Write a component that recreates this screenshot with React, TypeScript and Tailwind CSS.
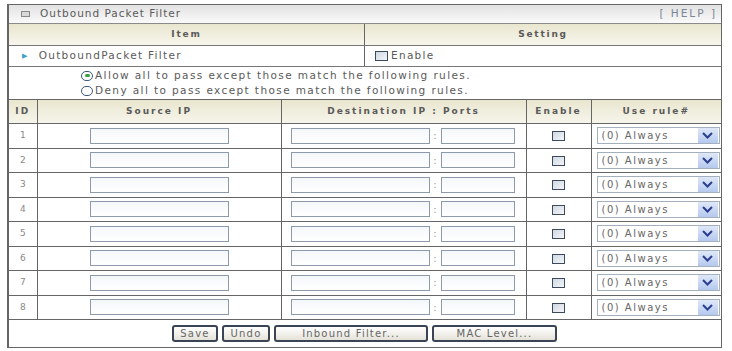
import React from "react";

const font = { fontFamily: '"DejaVu Sans", Verdana, sans-serif' };

function Box() {
  return (
    <span className="inline-block w-[13px] h-[10px] border border-[#3c4a5c] bg-gradient-to-br from-[#cfd8e2] to-[#f4f6f9] align-middle" />
  );
}

function TextBox({ w }: { w: string }) {
  return (
    <span className={`inline-block ${w} h-[16px] border border-[#8d9aab] bg-gradient-to-b from-[#f4f7fa] to-white align-middle`} />
  );
}

function Chevron() {
  return (
    <svg width="11" height="7" viewBox="0 0 11 7">
      <path d="M1 1 L5.5 5.5 L10 1" fill="none" stroke="#2c3f8f" strokeWidth="2" />
    </svg>
  );
}

function RuleSelect() {
  return (
    <div className="ml-[5px] w-[123px] h-[17px] border border-[#a5b0bf] bg-white flex items-center">
      <span className="flex-1 pl-[4px] text-[10px] text-[#666] tracking-[1.5px]">(0) Always</span>
      <span className="w-[20px] h-[15px] mr-[1px] flex items-center justify-center bg-gradient-to-b from-[#dfe8f8] to-[#b5c9ee]">
        <Chevron />
      </span>
    </div>
  );
}

function Btn({ w, label }: { w: string; label: string }) {
  return (
    <span className={`inline-flex ${w} h-[17px] items-center justify-center rounded-[3px] border-2 border-[#3b4454] bg-gradient-to-b from-white to-[#e4e2d8] text-[10px] text-[#666] tracking-[1.2px]`}>
      {label}
    </span>
  );
}

export default function App() {
  const rows = [1, 2, 3, 4, 5, 6, 7, 8];
  return (
    <div className="w-[732px] h-[351px] bg-white pt-[4px] pl-[7px]" style={font}>
      <div className="w-[715px] h-[344px] border border-[#666] border-l-2 flex flex-col">

        {/* TITLE BAR */}
        <div className="h-[19px] flex items-center justify-between bg-gradient-to-b from-[#e2e2e2] to-[#fafafa] border-b border-[#8a8a8a] pl-[12px] pr-[4px]">
          <div className="flex items-center text-[10.5px] text-[#5a5a5a] tracking-[1px]">
            <span className="inline-block w-[9px] h-[6px] border border-[#888] bg-[#d8d8d8] mr-[10px]" />
            Outbound Packet Filter
          </div>
          <span className="text-[10.5px] text-[#7b8595] tracking-[2px]">[ HELP ]</span>
        </div>

        {/* ITEM / SETTING */}
        <div className="h-[22px] flex bg-gradient-to-b from-[#e9e6cf] to-[#f7f6ec] border-b border-[#777] text-[9px] text-[#5a5a5a] font-bold tracking-[1.8px]">
          <div className="w-[356px] flex items-center justify-center border-r border-[#666]">Item</div>
          <div className="flex-1 flex items-center justify-center">Setting</div>
        </div>

        <div className="h-[21px] flex border-b border-[#777] text-[10.5px] text-[#5a5a5a] tracking-[1.3px]">
          <div className="w-[356px] flex items-center pl-[13px] border-r border-[#666]">
            <span className="text-[#3aa0c8] text-[7px] mr-[10px]">▶</span>
            OutboundPacket Filter
          </div>
          <div className="flex-1 flex items-center pl-[10px] gap-[3px]">
            <Box />
            Enable
          </div>
        </div>

        {/* RADIO OPTIONS */}
        <div className="h-[32px] flex flex-col justify-center pl-[72px] text-[10.5px] text-[#5a5a5a] tracking-[1.4px] leading-[15px]">
          <div className="flex items-center gap-[2px]">
            <span className="inline-flex w-[12px] h-[10px] rounded-full border border-[#3b5a7a] items-center justify-center">
              <span className="w-[5px] h-[3px] rounded-full bg-[#3aa040]" />
            </span>
            Allow all to pass except those match the following rules.
          </div>
          <div className="flex items-center gap-[2px]">
            <span className="inline-block w-[12px] h-[10px] rounded-full border border-[#3b5a7a]" />
            Deny all to pass except those match the following rules.
          </div>
        </div>

        {/* RULE TABLE */}
        <table className="border-collapse w-full text-[10px] text-[#555]">
          <thead>
            <tr className="h-[24px] bg-gradient-to-b from-[#e9e6cf] to-[#f7f6ec] text-[9px] text-[#5a5a5a] tracking-[2px]">
              <th className="w-[28px] border border-l-0 border-[#666] font-bold">ID</th>
              <th className="w-[244px] border border-[#666] font-bold">Source IP</th>
              <th className="w-[245px] border border-[#666] font-bold">Destination IP : Ports</th>
              <th className="w-[65px] border border-[#666] font-bold">Enable</th>
              <th className="border border-r-0 border-[#666] font-bold">Use rule#</th>
            </tr>
          </thead>
          <tbody>
            {rows.map((n) => (
              <tr key={n} className="h-[24.5px]">
                <td className="border border-l-0 border-[#666] text-center text-[9px] text-[#888]">{n}</td>
                <td className="border border-[#666] pl-[52px]">
                  <TextBox w="w-[139px]" />
                </td>
                <td className="border border-[#666] pl-[9px]">
                  <div className="flex items-center">
                    <TextBox w="w-[139px]" />
                    <span className="w-[11px] text-center text-[#999]">:</span>
                    <TextBox w="w-[74px]" />
                  </div>
                </td>
                <td className="border border-[#666] text-center">
                  <Box />
                </td>
                <td className="border border-r-0 border-[#666]">
                  <RuleSelect />
                </td>
              </tr>
            ))}
          </tbody>
        </table>

        {/* BUTTONS */}
        <div className="flex-1 flex items-center gap-[4px] pl-[163px]">
          <Btn w="w-[46px]" label="Save" />
          <Btn w="w-[48px]" label="Undo" />
          <Btn w="w-[154px]" label="Inbound Filter..." />
          <Btn w="w-[125px]" label="MAC Level..." />
        </div>

      </div>
    </div>
  );
}
